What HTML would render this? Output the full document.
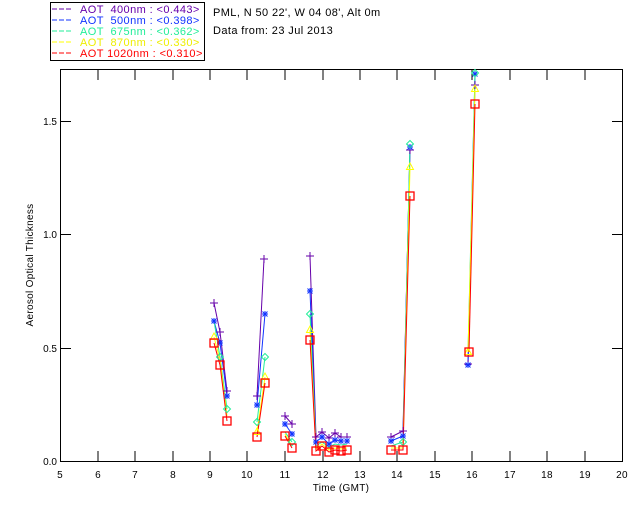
<!DOCTYPE html>
<html><head><meta charset="utf-8"><style>
html,body{margin:0;padding:0;background:#fff;}
svg{display:block;font-family:"Liberation Sans",sans-serif;}
</style></head><body>
<svg width="640" height="512" viewBox="0 0 640 512" xmlns="http://www.w3.org/2000/svg">
<defs>
<g id="pl"><path d="M-4 0H4M0 -4V4" stroke="#6600aa" stroke-width="1" fill="none"/></g>
<g id="st"><path d="M-3 0H3M0 -3V3M-2.5 -2.5L2.5 2.5M-2.5 2.5L2.5 -2.5" stroke="#1133ff" stroke-width="1" fill="none"/></g>
<g id="di"><path d="M0 -3.5L3.5 0L0 3.5L-3.5 0Z" stroke="#22ee99" stroke-width="1" fill="none"/></g>
<g id="tr"><path d="M0 -4L3.5 2.5H-3.5Z" stroke="#ffff00" stroke-width="1" fill="none"/></g>
<g id="sq"><rect x="-4" y="-4" width="8" height="8" stroke="#ff0000" stroke-width="1.3" fill="none"/></g>
</defs>
<rect width="640" height="512" fill="#fff"/>
<rect x="50.5" y="2.5" width="154" height="58" fill="none" stroke="#000"/>
<g font-size="11" letter-spacing="0.4">
<line x1="52" y1="9" x2="73" y2="9" stroke="#6600aa" stroke-dasharray="5,2"/><text x="80" y="13" fill="#6600aa">AOT &#160;400nm : &lt;0.443&gt;</text>
<line x1="52" y1="20" x2="73" y2="20" stroke="#1133ff" stroke-dasharray="5,2"/><text x="80" y="24" fill="#1133ff">AOT &#160;500nm : &lt;0.398&gt;</text>
<line x1="52" y1="31" x2="73" y2="31" stroke="#22ee99" stroke-dasharray="5,2"/><text x="80" y="35" fill="#22ee99">AOT &#160;675nm : &lt;0.362&gt;</text>
<line x1="52" y1="42" x2="73" y2="42" stroke="#ffff00" stroke-dasharray="5,2"/><text x="80" y="46" fill="#eeee00">AOT &#160;870nm : &lt;0.330&gt;</text>
<line x1="52" y1="53" x2="73" y2="53" stroke="#ff0000" stroke-dasharray="5,2"/><text x="80" y="57" fill="#ff0000">AOT 1020nm : &lt;0.310&gt;</text>
<text x="213" y="16" fill="#000">PML, N 50 22', W 04 08', Alt 0m</text>
<text x="213" y="34" fill="#000">Data from: 23 Jul 2013</text>
</g>
<rect x="60.5" y="69.5" width="562" height="392" fill="none" stroke="#000"/>
<g stroke="#000">
<path d="M98 461v-10M135 461v-10M173 461v-10M210 461v-10M247 461v-10M285 461v-10M323 461v-10M360 461v-10M397 461v-10M435 461v-10M472 461v-10M510 461v-10M547 461v-10M585 461v-10"/>
<path d="M98 70v10M135 70v10M173 70v10M210 70v10M247 70v10M285 70v10M323 70v10M360 70v10M397 70v10M435 70v10M472 70v10M510 70v10M547 70v10M585 70v10"/>
<path d="M61 348.5h10M61 234.5h10M61 121.5h10M622 348.5h-10M622 234.5h-10M622 121.5h-10"/>
</g>
<g font-size="10" fill="#000" text-anchor="middle" letter-spacing="0.3">
<text x="60" y="478">5</text><text x="98" y="478">6</text><text x="135" y="478">7</text><text x="173" y="478">8</text><text x="210" y="478">9</text><text x="247" y="478">10</text><text x="285" y="478">11</text><text x="323" y="478">12</text><text x="360" y="478">13</text><text x="397" y="478">14</text><text x="435" y="478">15</text><text x="472" y="478">16</text><text x="510" y="478">17</text><text x="547" y="478">18</text><text x="585" y="478">19</text><text x="622" y="478">20</text>
<text x="341" y="491">Time (GMT)</text>
</g>
<g font-size="10" fill="#000" text-anchor="end">
<text x="57" y="465">0.0</text><text x="57" y="352">0.5</text><text x="57" y="238">1.0</text><text x="57" y="125">1.5</text>
</g>
<text font-size="10" fill="#000" text-anchor="middle" letter-spacing="0.3" transform="translate(33,265) rotate(-90)">Aerosol Optical Thickness</text>
<g fill="none" stroke-width="1">
<g stroke="#6600aa">
<polyline points="214,303 220,332 227,391"/><polyline points="257,396 264,259"/><polyline points="285,416 292,424"/>
<polyline points="310,256 316,437 322,432 329,438 335,433 341,437 347,437"/><polyline points="391,437 403,431 410,150"/><polyline points="468,364 475,85"/></g>
<g stroke="#1133ff">
<polyline points="214,321 220,343 227,396"/><polyline points="257,405 265,314"/><polyline points="285,424 292,434"/>
<polyline points="310,291 316,442 322,437 329,444 335,440 341,441 347,441"/><polyline points="391,441 403,436 410,147"/><polyline points="468,365 475,74"/></g>
<g stroke="#22ee99">
<polyline points="214,321 220,357 227,409"/><polyline points="257,422 265,357"/><polyline points="285,432 292,442"/>
<polyline points="310,314 316,446 322,442 329,447 335,444 341,445 347,444"/><polyline points="391,446 403,442 410,144"/><polyline points="468,352 475,73"/></g>
<g stroke="#ffff00">
<polyline points="214,337 220,360 227,416"/><polyline points="257,432 265,377"/><polyline points="285,434 292,446"/>
<polyline points="310,330 316,449 322,444 329,450 335,448 341,449 347,448"/><polyline points="391,448 403,448 410,167"/><polyline points="468,352 475,89"/></g>
<g stroke="#ff0000">
<polyline points="214,343 220,365 227,421"/><polyline points="257,437 265,383"/><polyline points="285,436 292,448"/>
<polyline points="310,340 316,451 322,446 329,452 335,450 341,451 347,450"/><polyline points="391,450 403,450 410,196"/><polyline points="469,352 475,104"/></g>
</g>
<g>
<use href="#pl" x="214" y="303"/><use href="#pl" x="220" y="332"/><use href="#pl" x="227" y="391"/><use href="#pl" x="257" y="396"/><use href="#pl" x="264" y="259"/><use href="#pl" x="285" y="416"/><use href="#pl" x="292" y="424"/><use href="#pl" x="310" y="256"/><use href="#pl" x="316" y="437"/><use href="#pl" x="322" y="432"/><use href="#pl" x="329" y="438"/><use href="#pl" x="335" y="433"/><use href="#pl" x="341" y="437"/><use href="#pl" x="347" y="437"/><use href="#pl" x="391" y="437"/><use href="#pl" x="403" y="431"/><use href="#pl" x="410" y="150"/><use href="#pl" x="468" y="364"/><use href="#pl" x="475" y="85"/>
<use href="#st" x="214" y="321"/><use href="#st" x="220" y="343"/><use href="#st" x="227" y="396"/><use href="#st" x="257" y="405"/><use href="#st" x="265" y="314"/><use href="#st" x="285" y="424"/><use href="#st" x="292" y="434"/><use href="#st" x="310" y="291"/><use href="#st" x="316" y="442"/><use href="#st" x="322" y="437"/><use href="#st" x="329" y="444"/><use href="#st" x="335" y="440"/><use href="#st" x="341" y="441"/><use href="#st" x="347" y="441"/><use href="#st" x="391" y="441"/><use href="#st" x="403" y="436"/><use href="#st" x="410" y="147"/><use href="#st" x="468" y="365"/><use href="#st" x="475" y="74"/>
<use href="#di" x="220" y="357"/><use href="#di" x="227" y="409"/><use href="#di" x="257" y="422"/><use href="#di" x="265" y="357"/><use href="#di" x="292" y="442"/><use href="#di" x="310" y="314"/><use href="#di" x="403" y="442"/><use href="#di" x="410" y="144"/><use href="#di" x="475" y="73"/>
<use href="#tr" x="214" y="337"/><use href="#tr" x="257" y="432"/><use href="#tr" x="265" y="377"/><use href="#tr" x="310" y="330"/><use href="#tr" x="410" y="167"/><use href="#tr" x="468" y="352"/><use href="#tr" x="475" y="89"/>
<use href="#sq" x="214" y="343"/><use href="#sq" x="220" y="365"/><use href="#sq" x="227" y="421"/><use href="#sq" x="257" y="437"/><use href="#sq" x="265" y="383"/><use href="#sq" x="285" y="436"/><use href="#sq" x="292" y="448"/><use href="#sq" x="310" y="340"/><use href="#sq" x="316" y="451"/><use href="#sq" x="322" y="446"/><use href="#sq" x="329" y="452"/><use href="#sq" x="335" y="450"/><use href="#sq" x="341" y="451"/><use href="#sq" x="347" y="450"/><use href="#sq" x="391" y="450"/><use href="#sq" x="403" y="450"/><use href="#sq" x="410" y="196"/><use href="#sq" x="469" y="352"/><use href="#sq" x="475" y="104"/>
</g>
</svg>
</body></html>
